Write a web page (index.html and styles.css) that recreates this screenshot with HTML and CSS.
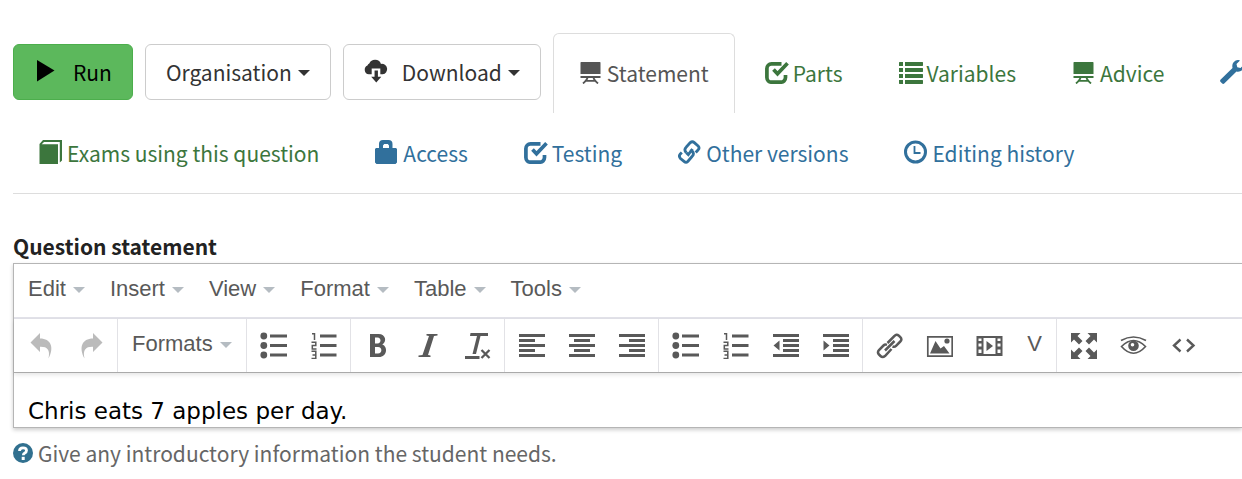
FILE: index.html
```html
<!DOCTYPE html>
<html lang="en">
<head>
<meta charset="utf-8">
<title>Question editor</title>
<link rel="stylesheet" href="styles.css">
</head>
<body>
<svg class="sprite" aria-hidden="true">
  <symbol id="play" viewBox="0 0 24 24"><path d="M3 1 20.500 11.500 3 22.500z"/></symbol>
  <symbol id="cloud" viewBox="0 0 25 24"><path d="M5 15.500A4.900 4.900 0 0 1 3.600 6.200 3.600 3.600 0 0 1 5.500 4.300 6.600 6.600 0 0 1 17.700 4.600 5.500 5.500 0 1 1 19.500 15.500H17V9.500H8v6z"/><path d="M11 11.500h3.500V18H18l-5.200 6L7.500 18H11z"/></symbol>
  <symbol id="board" viewBox="0 0 24 24"><path d="M2 2h19l.5.500V14h-20V2.500zM1.500 16h20v2h-20z"/><path class="line" d="M8.500 17.500Q8 20 4 23.500M14.500 17.500Q15 20 19 23.500M7 20.800h9" stroke-width="1.800"/></symbol>
  <symbol id="check" viewBox="0 0 24 24"><path class="line" d="M16.500 3.800H6.500A4.700 4.700 0 0 0 1.900 8.500v9a4.700 4.700 0 0 0 4.700 4.700h9.200a4.700 4.700 0 0 0 4.700-4.700V15" stroke-width="3.700"/><path class="line" d="m8.500 9.500 4 4.200L22.500 3.200" stroke-width="3.700"/></symbol>
  <symbol id="list" viewBox="0 0 24 24"><path d="M.5 2H4v4H0V2.500zM0 8h4v4H0zM0 14h4v4H0zM0 20h4v4H.5L0 23.500zM6 2h17.500l.5.500v3l-.5.500H6zM6 8h17.500l.5.500v3l-.5.500H6zM6 14h17.500l.5.500v3l-.5.500H6zM6 20h17.500l.5.500v3l-.5.500H6z"/></symbol>
  <symbol id="wrench" viewBox="0 0 24 24"><path d="M18.500 0 20 .5 16.500 4l.8 3.200 3.200.8L24 4.500c.8 4.500-3 8-7.500 7L4.500 23.300c-.8.800-1.800.8-2.500 0l-1.300-1.300c-.8-.8-.8-1.800 0-2.500L12.500 8C11.500 3.500 14.500-.2 18.500 0z"/></symbol>
  <symbol id="book" viewBox="0 0 24 24"><path d="M4 0h19v20.500L20.800 22.500V2H5L2.700 4.200H19V24H.5V4z"/></symbol>
  <symbol id="lock" viewBox="0 0 24 24"><path fill-rule="evenodd" d="M4 8V4Q4 0 8 0h5.500q4 0 4 4v4H21l1 1v13.500L20.500 24h-19L0 22.500V9l1-1zm4 0h6V5.500L12.800 4H9.200L8 5.500z"/></symbol>
  <symbol id="chain" viewBox="0 0 24 24"><g class="line" stroke-width="2.800"><path d="M8.300 12.800Q5.500 9.800 8.300 7l4-4.400Q14.300.8 16.300 2.600l3.800 3.300Q22 8 20 10l-2.300 2.500"/><path d="M14 10.700Q16.800 13.700 14 16.500l-4.200 5Q8 23.200 6 21.400L2.200 18.200Q.5 16 2.300 14l1.500-1.500M8.300 12.800l2 1.800L14.500 9M14 10.700l-1.500-1.500"/></g></symbol>
  <symbol id="clock" viewBox="0 0 24 24"><circle class="line" cx="11.500" cy="12" r="10" stroke-width="3"/><path class="line" d="M10.500 6v7h6" stroke-width="1.800"/></symbol>
  <symbol id="help" viewBox="0 0 20 20"><circle cx="10" cy="10" r="10"/><path class="line mark" d="M6.500 8Q6.500 4.800 10 4.800T13.500 7.500Q13.500 9 11.800 10 10.300 10.800 10.300 12.300" stroke-width="2.800"/><path class="dot" d="M8.700 13.800h3V17h-3z"/></symbol>

  <symbol id="undo" viewBox="0 0 27 27"><path d="M2.500 10.500 12 1v5.500c11 0 14.500 9 8.500 20 2-9-1.500-12-8.500-11.700V20z"/></symbol>
  <symbol id="redo" viewBox="0 0 27 27"><path d="M24.500 10.500 15 1v5.500c-11 0-14.500 9-8.500 20-2-9 1.500-12 8.500-11.700V20z"/></symbol>
  <symbol id="bullets" viewBox="0 0 27 27"><circle cx="3.800" cy="4" r="3.400"/><circle cx="3.800" cy="13.500" r="3.400"/><circle cx="3.800" cy="23" r="3.400"/><path d="M10 2.500h17v3H10zM10 12h17v3H10zM10 21.500h17v3H10z"/></symbol>
  <symbol id="numbers" viewBox="0 0 27 27"><path class="line" d="M2 1.800h2.500V8M1.500 10.200h4.300v3.200H2.300V17h4.200M1.500 19.300h4.300v7.200H1.500M2.500 22.900h3" stroke-width="1.500"/><path d="M10 2.500h16.500v3H10zM10 12h16.500v3H10zM10 21.500h16.500v3H10z"/></symbol>
  <symbol id="bold" viewBox="0 0 27 27"><path fill-rule="evenodd" d="M6 2h8.500c7.500 0 8.500 8 3.800 10.500C24 14.500 23.500 25 15 25H6zm5 3.500v6h2.500c4 0 4-6 0-6zm0 9.500v6.500h3c4.500 0 4.500-6.500 0-6.500z"/></symbol>
  <symbol id="italic" viewBox="0 0 27 27"><path d="M12.500 2H23.500v1.500l-3.500.5-6 19 2.500.5V25H4.500v-1.500L8.500 23l6.500-19-2.500-.5z"/></symbol>
  <symbol id="clear" viewBox="0 0 27 27"><path d="M6.500 1H24v3h-7.500L12 22H8.500L13 4H6zM1 24h14.500v3H1z"/><path class="line" d="m17.500 18 8 8m0-8-8 8" stroke-width="2.300"/></symbol>
  <symbol id="left" viewBox="0 0 27 27"><path d="M1 2h26v3H1zM1 7h16v3H1zM1 12h26v3H1zM1 17h16v3H1zM1 22h26v3H1z"/></symbol>
  <symbol id="center" viewBox="0 0 27 27"><path d="M1 2h26v3H1zM6 7h16v3H6zM1 12h26v3H1zM6 17h16v3H6zM1 22h26v3H1z"/></symbol>
  <symbol id="right" viewBox="0 0 27 27"><path d="M1 2h26v3H1zM11 7h16v3H11zM1 12h26v3H1zM11 17h16v3H11zM1 22h26v3H1z"/></symbol>
  <symbol id="outdent" viewBox="0 0 27 27"><path d="M1 2h26v3H1zM11 7h16v3H11zM11 12h16v3H11zM11 17h16v3H11zM1 22h26v3H1zM7.500 8.500v10l-6-5z"/></symbol>
  <symbol id="indent" viewBox="0 0 27 27"><path d="M1 2h26v3H1zM11 7h16v3H11zM11 12h16v3H11zM11 17h16v3H11zM1 22h26v3H1zM1.500 8.500v10l6-5z"/></symbol>
  <symbol id="link" viewBox="0 0 27 27"><g class="line" stroke-width="2.500"><path d="M11.500 11 18.500 4Q20.500 1.500 22.800 3.700l1.500 1.500Q26.500 7.500 24.300 9.500L20 13.800Q18.500 15.300 16.500 14.500"/><path d="M11 12.800Q9 12 7.500 13.500L3 18Q1 20.500 3 22.500l1.500 1.500Q6.500 26 9 24l6.500-7"/><path d="m9 18.500 9.500-9.500"/></g></symbol>
  <symbol id="image" viewBox="0 0 27 27"><path class="line" d="M1.800 4.800h24.400v19.400H1.800z" stroke-width="1.700"/><path d="M4 21.500 9.500 9l5 7.500 3.500-2.500 5.500 7.500z"/><circle cx="21" cy="9" r="2.600"/></symbol>
  <symbol id="video" viewBox="0 0 27 27"><path fill-rule="evenodd" d="M.5 4h26v20H.5zm7 2v16h12V6zm-5 .5v2.500h3V6.500zm0 5v3h3v-3zm0 6v3.500h3v-3.500zm19-11v2.500h3V6.500zm0 5v3h3v-3zm0 6v3.500h3v-3.500z"/><path d="m10.500 9 6.500 5-6.500 5z"/></symbol>
  <symbol id="expand" viewBox="0 0 27 27"><path d="M1 1h9.500L7.500 4l5 5L9 12.500l-5-5-3 3zM27 1h-9.500l3 3-5 5 3.500 3.500 5-5 3 3zM1 27h9.500l-3-3 5-5L9 15.500l-5 5-3-3zM27 27h-9.500l3-3-5-5 3.500-3.500 5 5 3-3z"/></symbol>
  <symbol id="eye" viewBox="0 0 27 27"><path class="line" d="M1 8.500Q13.500 1.500 26 8.500M1.500 14.500Q13.500 2.500 25.500 14.500 13.500 28 1.500 14.500z" stroke-width="1.600"/><path fill-rule="evenodd" d="M13.500 8.500a5.300 5.300 0 1 1 0 10.600 5.300 5.300 0 1 1 0-10.600zm-1 2.500a1.800 1.800 0 1 0 0 3.600 1.800 1.800 0 1 0 0-3.600z"/></symbol>
  <symbol id="code" viewBox="0 0 27 27"><path class="line" d="m10.500 7.500-6.500 6 6.500 6M17 7.500l6.500 6-6.500 6" stroke-width="2.400"/></symbol>
</svg>

<header class="page-nav">
  <div class="nav-row">
    <div class="actions">
      <button class="btn btn-run" type="button"><svg class="glyph"><use href="#play"/></svg>Run</button>
      <button class="btn" type="button">Organisation<span class="caret"></span></button>
      <button class="btn btn-download" type="button"><svg class="glyph"><use href="#cloud"/></svg>Download<span class="caret"></span></button>
    </div>
    <nav class="tabs" aria-label="Question sections">
      <a class="tab active" href="#statement"><svg class="glyph"><use href="#board"/></svg>Statement</a>
      <a class="tab" href="#parts"><svg class="glyph"><use href="#check"/></svg>Parts</a>
      <a class="tab" href="#variables"><svg class="glyph"><use href="#list"/></svg>Variables</a>
      <a class="tab" href="#advice"><svg class="glyph"><use href="#board"/></svg>Advice</a>
      <a class="tab blue" href="#settings" aria-label="Settings"><svg class="glyph"><use href="#wrench"/></svg></a>
    </nav>
  </div>
  <nav class="tabs" aria-label="Question tools">
    <a class="tab" href="#exams"><svg class="glyph"><use href="#book"/></svg>Exams using this question</a>
    <a class="tab blue" href="#access"><svg class="glyph"><use href="#lock"/></svg>Access</a>
    <a class="tab blue" href="#testing"><svg class="glyph"><use href="#check"/></svg>Testing</a>
    <a class="tab blue" href="#versions"><svg class="glyph"><use href="#chain"/></svg>Other versions</a>
    <a class="tab blue" href="#history"><svg class="glyph"><use href="#clock"/></svg>Editing history</a>
  </nav>
</header>

<main class="statement" id="statement">
  <label class="field-label" for="content">Question statement</label>
  <div class="editor">
    <div class="menubar">
      <button class="menu" type="button">Edit<span class="caret"></span></button>
      <button class="menu" type="button">Insert<span class="caret"></span></button>
      <button class="menu" type="button">View<span class="caret"></span></button>
      <button class="menu" type="button">Format<span class="caret"></span></button>
      <button class="menu" type="button">Table<span class="caret"></span></button>
      <button class="menu" type="button">Tools<span class="caret"></span></button>
    </div>
    <div class="toolbar">
      <div class="group">
        <button class="tool" type="button" aria-label="Undo" disabled><svg><use href="#undo"/></svg></button>
        <button class="tool" type="button" aria-label="Redo" disabled><svg><use href="#redo"/></svg></button>
      </div>
      <div class="group">
        <button class="menu formats" type="button">Formats<span class="caret"></span></button>
      </div>
      <div class="group">
        <button class="tool" type="button" aria-label="Bullet list"><svg><use href="#bullets"/></svg></button>
        <button class="tool" type="button" aria-label="Numbered list"><svg><use href="#numbers"/></svg></button>
      </div>
      <div class="group">
        <button class="tool" type="button" aria-label="Bold"><svg><use href="#bold"/></svg></button>
        <button class="tool" type="button" aria-label="Italic"><svg><use href="#italic"/></svg></button>
        <button class="tool" type="button" aria-label="Clear formatting"><svg><use href="#clear"/></svg></button>
      </div>
      <div class="group">
        <button class="tool" type="button" aria-label="Align left"><svg><use href="#left"/></svg></button>
        <button class="tool" type="button" aria-label="Align center"><svg><use href="#center"/></svg></button>
        <button class="tool" type="button" aria-label="Align right"><svg><use href="#right"/></svg></button>
      </div>
      <div class="group">
        <button class="tool" type="button" aria-label="Bullet list"><svg><use href="#bullets"/></svg></button>
        <button class="tool" type="button" aria-label="Numbered list"><svg><use href="#numbers"/></svg></button>
        <button class="tool" type="button" aria-label="Decrease indent"><svg><use href="#outdent"/></svg></button>
        <button class="tool" type="button" aria-label="Increase indent"><svg><use href="#indent"/></svg></button>
      </div>
      <div class="group">
        <button class="tool" type="button" aria-label="Insert link"><svg><use href="#link"/></svg></button>
        <button class="tool" type="button" aria-label="Insert image"><svg><use href="#image"/></svg></button>
        <button class="tool" type="button" aria-label="Insert video"><svg><use href="#video"/></svg></button>
        <button class="tool tool-text" type="button">V</button>
      </div>
      <div class="group">
        <button class="tool" type="button" aria-label="Fullscreen"><svg><use href="#expand"/></svg></button>
        <button class="tool" type="button" aria-label="Preview"><svg><use href="#eye"/></svg></button>
        <button class="tool" type="button" aria-label="Source code"><svg><use href="#code"/></svg></button>
      </div>
    </div>
    <textarea class="content" id="content" rows="1" aria-describedby="hint">Chris eats 7 apples per day.</textarea>
  </div>
  <p class="hint" id="hint"><svg class="help-icon" aria-hidden="true"><use href="#help"/></svg>Give any introductory information the student needs.</p>
</main>
</body>
</html>
```
FILE: styles.css
```css
* { box-sizing: border-box; }

body {
  margin: 0;
  padding: 33px 0 8px 13px;
  overflow-x: hidden;
  background: #fff;
  color: #333;
  font: 21px/32px "Noto Sans CJK SC", "Open Sans", sans-serif;
}

button, textarea { font: inherit; color: inherit; }
button { margin: 0; background: none; border: 0; cursor: pointer; white-space: nowrap; }
svg { flex: none; fill: currentColor; }
.sprite { display: none; }
.line { fill: none; stroke: currentColor; }
.glyph { width: 24px; height: 24px; margin-bottom: 2px; }

.caret {
  margin-top: 2px;
  border: 6px solid transparent;
  border-top-color: currentColor;
  border-bottom: 0;
}

/* Navigation */
.page-nav { border-bottom: 1px solid #ddd; }
.nav-row { display: flex; gap: 12px; }
.actions {
  display: flex;
  align-items: center;
  gap: 12px;
  padding-bottom: 2px;
}

.btn {
  display: flex;
  align-items: center;
  gap: 6px;
  height: 56px;
  padding: 0 20px 1px;
  border: 1px solid #ccc;
  border-radius: 6px;
  background: #fff;
}
.btn-run {
  gap: 15px;
  border-color: #4cae4c;
  background: #5cb85c;
  color: #000;
}
.btn-download .glyph { margin-right: 8px; }

.tabs { display: flex; gap: 4px; }
.tab {
  display: flex;
  flex: none;
  align-items: center;
  gap: 4px;
  height: 80px;
  padding: 0 25px 2px;
  border: 1px solid transparent;
  border-bottom: 0;
  border-radius: 6px 6px 0 0;
  color: #3c763d;
  text-decoration: none;
  white-space: nowrap;
}
.tab.active { border-color: #ddd; color: #555; }
.tab.blue { color: #31709c; }

/* Statement field */
.field-label {
  display: block;
  margin-top: 35px;
  line-height: 34px;
  color: #222;
  font-weight: bold;
}

.editor {
  border: 1px solid #b5b5b5;
  border-right: 0;
  box-shadow: 0 2px 4px rgba(0, 0, 0, .2);
  color: #595959;
  font-family: "Liberation Sans", Arial, sans-serif;
  font-size: 22px;
}
.menubar {
  display: flex;
  height: 55px;
  padding-left: 1px;
  border-bottom: 2px solid #e2e2e9;
}
.menu {
  display: flex;
  align-items: center;
  gap: 7px;
  padding: 0 12px 4px 13px;
}
.menu .caret { border-top-color: #b5bcc2; }

.toolbar {
  display: flex;
  height: 54px;
  border-bottom: 1px solid #aaa;
  box-shadow: 0 2px 4px rgba(0, 0, 0, .1);
}
.group {
  display: flex;
  flex: none;
  padding: 0 1px 0 2px;
  border-right: 1px solid #e2e2e6;
}
.group:last-child { border-right: 0; }
.formats { padding: 0 13px 4px 12px; }
.tool {
  display: flex;
  align-items: center;
  justify-content: center;
  width: 50px;
  padding: 0;
}
.tool svg { width: 27px; height: 27px; }
.tool:disabled { color: #bbb; }
.tool-text { width: 40px; padding-bottom: 4px; }

.content {
  display: block;
  width: 100%;
  height: 54px;
  padding: 22px 14px 0;
  border: 0;
  outline: 0;
  resize: none;
  overflow: hidden;
  background: none;
  color: #000;
  font-family: "DejaVu Sans", Verdana, sans-serif;
  font-size: 23px;
}

.hint {
  display: flex;
  align-items: center;
  gap: 5px;
  margin: 9px 0 0;
  color: #666;
}
.help-icon { width: 20px; height: 20px; color: #31708f; }
.mark { stroke: #fff; }
.dot { fill: #fff; }
```
